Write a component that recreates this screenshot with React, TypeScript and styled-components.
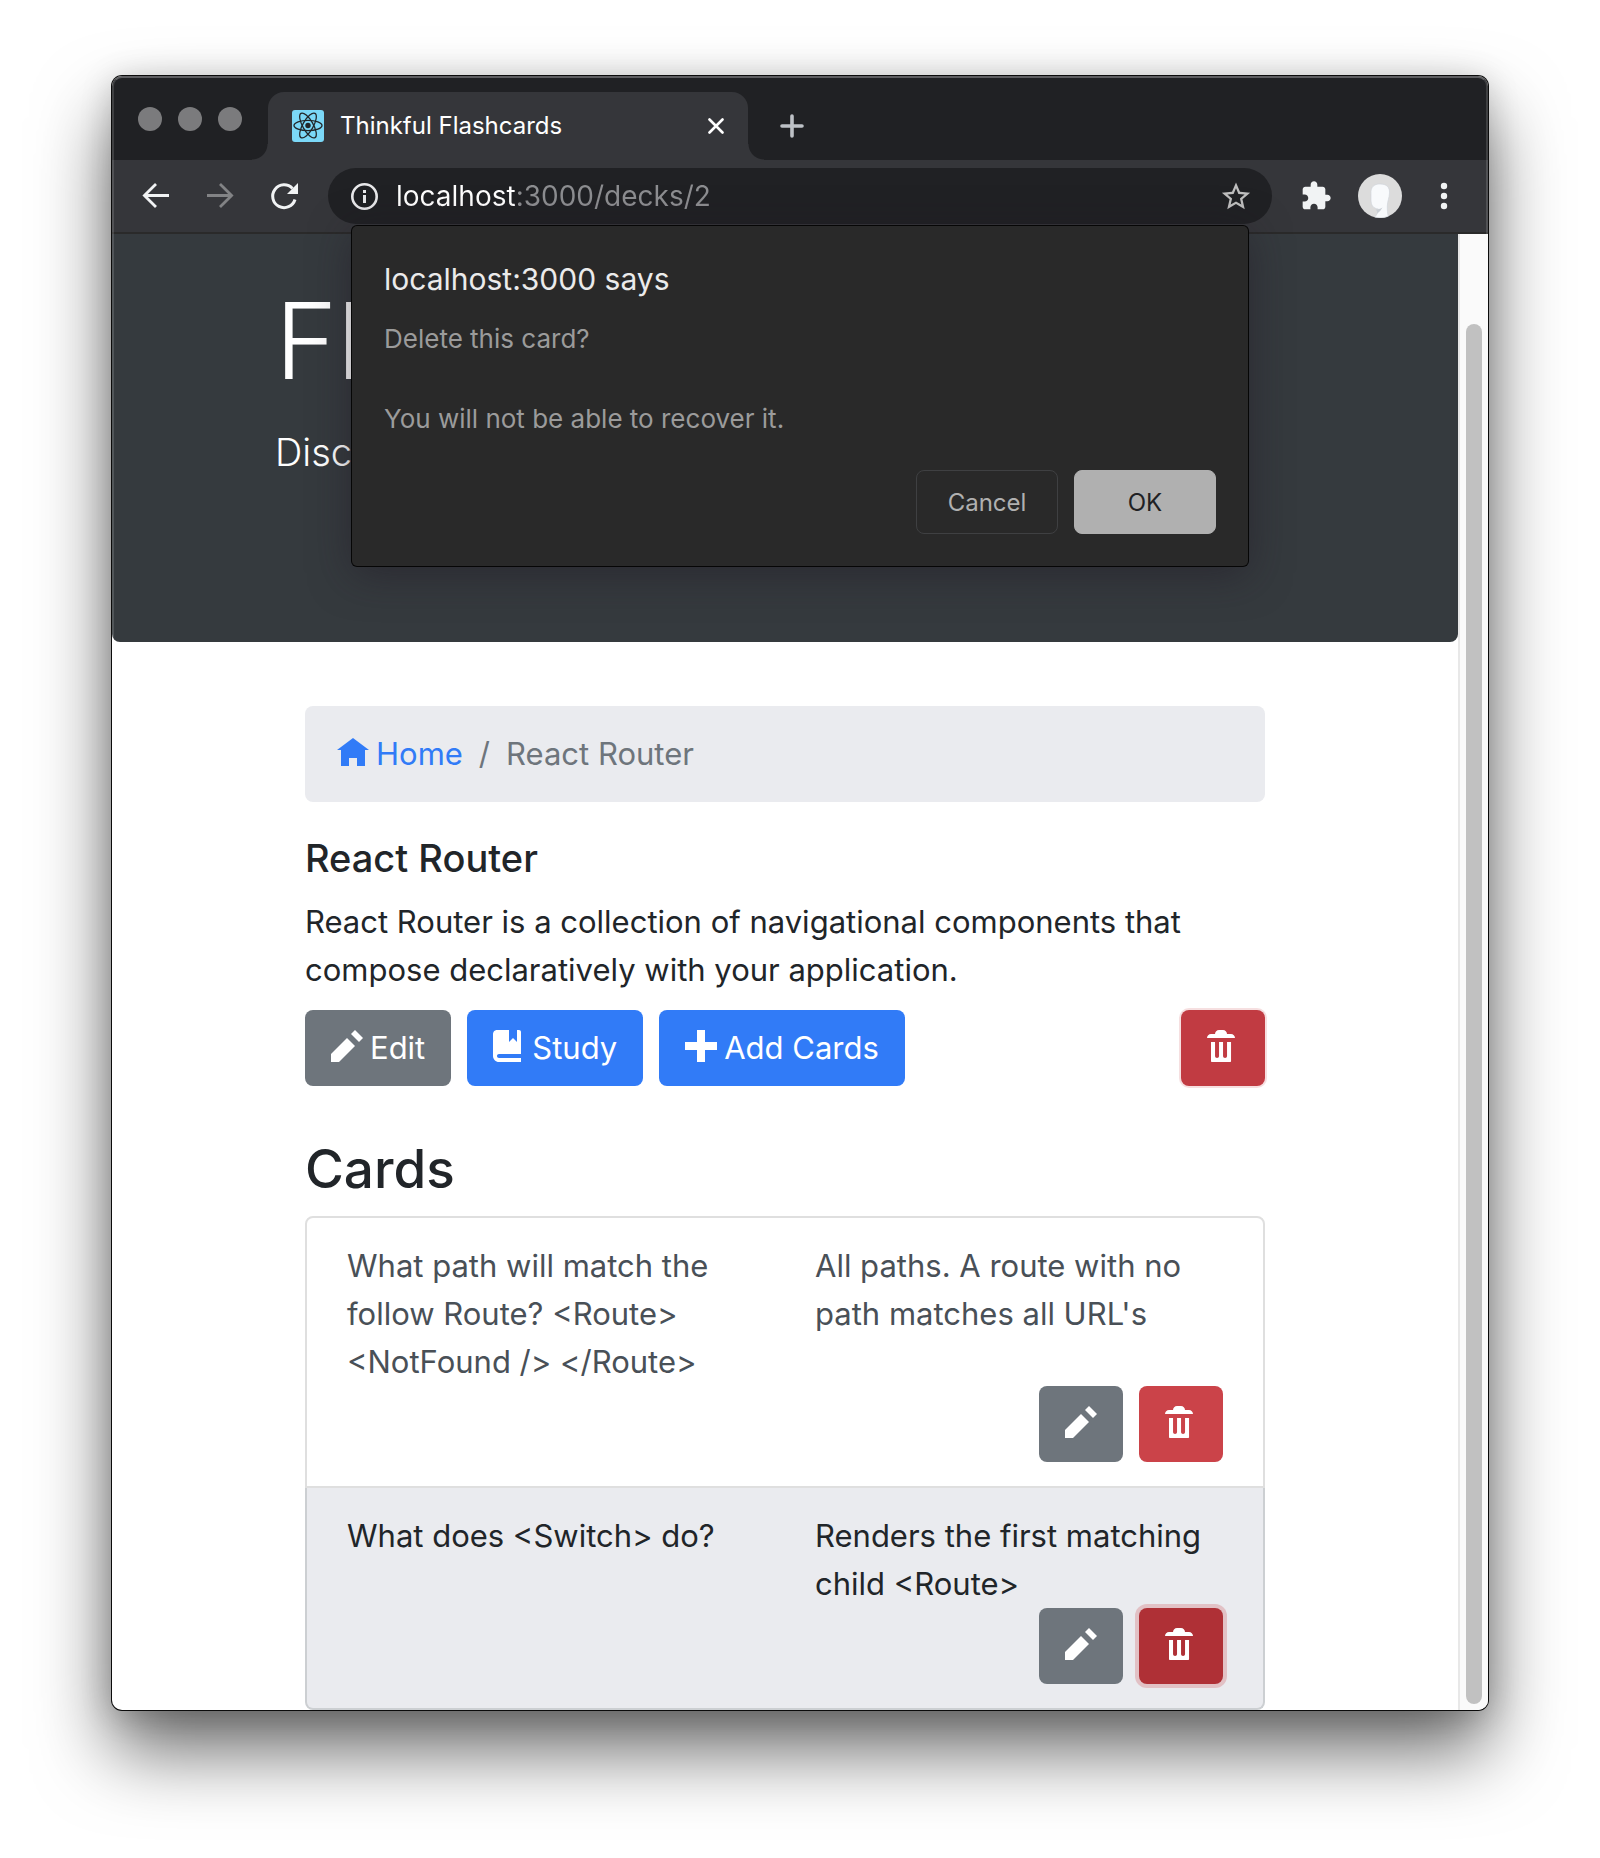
import React from "react";
import styled, { createGlobalStyle, css } from "styled-components";

const colors = {
  strip: "#202124",
  toolbar: "#35363a",
  jumbotron: "#353a3e",
  dialog: "#292929",
  primary: "#317bf7",
  secondary: "#6e757c",
  danger: "#cb4349",
  dangerFocus: "#c13b42",
  dangerActive: "#af3036",
  panel: "#eaebef",
  text: "#212529",
  muted: "#495057",
  line: "#dfdfdf",
};

const GlobalStyle = createGlobalStyle`
  *, *::before, *::after { box-sizing: border-box; }
  body {
    margin: 0;
    background: #fff;
    font-family: Inter, "Liberation Sans", sans-serif;
    color: ${colors.text};
  }
  h1, h2, h3, p, ol, ul { margin: 0; padding: 0; font-weight: 400; }
  ol, ul { list-style: none; }
  button, input { font-family: inherit; }
`;

const Desktop = styled.div`
  padding: 76px 112px 148px;
`;

const Window = styled.div`
  position: relative;
  border-radius: 10px;
  background: #fff;
  box-shadow:
    0 0 0 1px #0b0b0b,
    0 4px 32px rgba(0, 0, 0, 0.18),
    0 40px 76px rgba(0, 0, 0, 0.6);

  &::after {
    content: "";
    position: absolute;
    inset: 0;
    border-radius: 10px;
    border: 2px solid rgba(255, 255, 255, 0.14);
    border-top-color: rgba(255, 255, 255, 0.28);
    border-bottom: 0;
    pointer-events: none;
  }
`;

const TabStrip = styled.div`
  display: flex;
  align-items: center;
  height: 84px;
  border-radius: 10px 10px 0 0;
  background: ${colors.strip};
`;

const WindowControls = styled.div`
  display: flex;
  gap: 16px;
  padding: 2px 26px 0;
`;

const WindowControl = styled.button`
  width: 24px;
  height: 24px;
  padding: 0;
  border: 0;
  border-radius: 50%;
  background: #7b7b7d;
`;

const Tab = styled.div`
  position: relative;
  display: flex;
  align-items: center;
  align-self: flex-end;
  gap: 16px;
  width: 480px;
  height: 68px;
  padding: 0 24px;
  border-radius: 16px 16px 0 0;
  background: ${colors.toolbar};

  &::before,
  &::after {
    content: "";
    position: absolute;
    bottom: 0;
    width: 16px;
    height: 16px;
  }
  &::before {
    right: 100%;
    background: radial-gradient(circle at 0 0, transparent 15px, ${colors.toolbar} 16px);
  }
  &::after {
    left: 100%;
    background: radial-gradient(circle at 100% 0, transparent 15px, ${colors.toolbar} 16px);
  }
`;

const TabTitle = styled.span`
  flex: 1;
  color: #fff;
  font-size: 24px;
  line-height: 32px;
`;

const IconButton = styled.button<{ $size: number }>`
  display: flex;
  flex: none;
  align-items: center;
  justify-content: center;
  width: ${(p) => p.$size}px;
  height: ${(p) => p.$size}px;
  padding: 0;
  border: 0;
  background: none;
`;

const NewTab = styled(IconButton)`
  align-self: flex-end;
  margin: 0 32px 22px;
`;

const Toolbar = styled.div`
  display: flex;
  align-items: center;
  height: 74px;
  padding: 0 28px;
  border-bottom: 2px solid #2a2a2a;
  background: ${colors.toolbar};
`;

const ToolGroup = styled.div<{ $gap: number }>`
  display: flex;
  align-items: center;
  gap: ${(p) => p.$gap}px;
`;

const Omnibox = styled.div`
  display: flex;
  flex: 1;
  align-items: center;
  gap: 16px;
  height: 56px;
  margin: 0 28px;
  padding: 0 20px;
  border-radius: 28px;
  background: ${colors.strip};
`;

const Address = styled.input`
  flex: 1;
  min-width: 0;
  height: 40px;
  padding: 0;
  border: 0;
  outline: 0;
  color: #fff;
  font-size: 28px;
  background: linear-gradient(90deg, #fff 120px, #8d8e91 120px);
  background-clip: text;
  -webkit-text-fill-color: transparent;
`;

const Viewport = styled.div`
  display: flex;
`;

const Page = styled.main`
  flex: 1;
  min-width: 0;
`;

const ScrollTrack = styled.div`
  width: 30px;
  padding: 90px 6px 6px;
  border-left: 2px solid #e8e8e8;
  border-radius: 0 0 10px 0;
  background: #fafafa;
`;

const ScrollThumb = styled.div`
  width: 16px;
  height: 100%;
  border-radius: 8px;
  background: #c1c1c1;
`;

const Jumbotron = styled.header`
  padding: 40px 0 160px;
  border-radius: 0 0 8px 8px;
  background: ${colors.jumbotron};
  color: #fff;
`;

const Container = styled.div<{ $inset: number }>`
  max-width: 1080px;
  margin: 0 auto;
  padding: 0 ${(p) => p.$inset}px;
`;

const Brand = styled.h1`
  margin-bottom: 14px;
  font-size: 106px;
  font-weight: 300;
  line-height: 134px;
`;

const Lead = styled.p`
  font-size: 38px;
  font-weight: 300;
  line-height: 60px;
`;

const Breadcrumb = styled.ol`
  display: flex;
  margin: 64px 0 32px;
  padding: 24px 32px;
  border-radius: 8px;
  background: ${colors.panel};
  font-size: 31px;
  line-height: 48px;
`;

const Crumb = styled.li`
  color: ${colors.secondary};

  & + &::before {
    content: "/";
    padding: 0 16px;
  }
`;

const HomeLink = styled.a`
  display: flex;
  align-items: center;
  gap: 7px;
  color: ${colors.primary};
  text-decoration: none;
`;

const DeckName = styled.h2`
  margin-bottom: 16px;
  font-size: 38px;
  font-weight: 500;
  line-height: 48px;
`;

const DeckText = styled.p`
  margin-bottom: 16px;
  font-size: 31px;
  line-height: 48px;
`;

const Actions = styled.div<{ $end?: boolean }>`
  display: flex;
  gap: 16px;
  justify-content: ${(p) => (p.$end ? "flex-end" : "flex-start")};
`;

type Tone = "primary" | "secondary" | "danger";
type State = "focus" | "active";

const Button = styled.button<{ $tone: Tone; $state?: State; $push?: boolean }>`
  display: flex;
  align-items: center;
  gap: 7px;
  height: 76px;
  padding: 0 26px;
  border: 0;
  border-radius: 8px;
  background: ${(p) => colors[p.$tone]};
  color: #fff;
  font-size: 31px;
  line-height: 48px;

  svg {
    margin-bottom: 4px;
  }

  ${(p) => p.$push && css`margin-left: auto;`}
  ${(p) =>
    p.$state === "focus" &&
    css`
      background: ${colors.dangerFocus};
      box-shadow: 0 0 0 2px rgba(203, 67, 73, 0.17);
    `}
  ${(p) =>
    p.$state === "active" &&
    css`
      background: ${colors.dangerActive};
      box-shadow: 0 0 0 4px rgba(203, 67, 73, 0.25);
    `}
`;

const CardsTitle = styled.h2`
  margin: 50px 0 14px;
  font-size: 53px;
  font-weight: 500;
  line-height: 66px;
`;

const CardList = styled.ul`
  border-radius: 8px;
`;

const CardItem = styled.li<{ $active?: boolean }>`
  display: grid;
  grid-template-columns: 1fr 1fr;
  column-gap: 60px;
  padding: 24px 40px;
  border: 2px solid ${colors.line};
  color: ${colors.muted};
  font-size: 31px;
  line-height: 48px;

  &:first-child {
    border-radius: 8px 8px 0 0;
  }
  &:last-child {
    border-radius: 0 0 8px 8px;
  }
  ${(p) =>
    p.$active &&
    css`
      border-color: #cccfd2;
      border-top: 0;
      background: ${colors.panel};
      color: ${colors.text};
    `}
`;

const CardActions = styled(Actions)`
  grid-column: 1 / -1;
`;

const Dialog = styled.div`
  position: absolute;
  top: 150px;
  left: 0;
  right: 0;
  z-index: 1;
  width: 896px;
  margin: 0 auto;
  padding: 32px;
  border-radius: 5px;
  background: ${colors.dialog};
  box-shadow:
    0 0 0 1px #060606,
    0 8px 40px rgba(32, 24, 36, 0.5);
`;

const DialogTitle = styled.h2`
  margin-bottom: 18px;
  color: #ebebeb;
  font-size: 30px;
  line-height: 43px;
`;

const DialogText = styled.p`
  margin-bottom: 31px;
  color: #9b9b9b;
  font-size: 26px;
  line-height: 40px;
  white-space: pre-line;
`;

const DialogButton = styled.button<{ $main?: boolean }>`
  width: 142px;
  height: 64px;
  padding: 0;
  border: 1px solid ${(p) => (p.$main ? "#b0b0b0" : "#3f4042")};
  border-radius: 8px;
  background: ${(p) => (p.$main ? "#b0b0b0" : "transparent")};
  color: ${(p) => (p.$main ? "#202124" : "#b0b0b0")};
  font-size: 24px;
`;

/* Open Iconic glyphs, drawn on an 8 by 8 grid */
const glyphs = {
  pencil: "M6 0l-1 1 2 2 1-1-2-2zm-2 2l-4 4v2h2l4-4-2-2z",
  trash:
    "M3 0c-.55 0-1 .45-1 1h-1c-.55 0-1 .45-1 1h7c0-.55-.45-1-1-1h-1c0-.55-.45-1-1-1h-1zm-2 3v4.81c0 .11.08.19.19.19h4.63c.11 0 .19-.08.19-.19v-4.81h-1v3.5c0 .28-.22.5-.5.5s-.5-.22-.5-.5v-3.5h-1v3.5c0 .28-.22.5-.5.5s-.5-.22-.5-.5v-3.5h-1z",
  book: "M1 0c-.07 0-.13.01-.19.03-.39.08-.7.39-.78.78-.03.06-.03.12-.03.19v5.5c0 .83.67 1.5 1.5 1.5h5.5v-1h-5.5c-.28 0-.5-.22-.5-.5s.22-.5.5-.5h5.5v-5.5c0-.28-.22-.5-.5-.5h-.5v3l-1-1-1 1v-3h-3z",
  plus: "M3 0v3h-3v2h3v3h2v-3h3v-2h-3v-3h-2z",
  home: "M4 0l-4 3h1v4h2v-2h2v2h2v-4.03l1 .03-4-3z",
};

function Glyph({ name }: { name: keyof typeof glyphs }) {
  return (
    <svg width="32" height="32" viewBox="0 0 8 8" fill="currentColor" aria-hidden="true">
      <path d={glyphs[name]} />
    </svg>
  );
}

function Favicon() {
  return (
    <svg width="32" height="32" viewBox="0 0 32 32" aria-hidden="true">
      <rect width="32" height="32" rx="3" fill="#7bd8f7" />
      <g fill="none" stroke="#222629" strokeWidth="1.3">
        <ellipse cx="16" cy="15.5" rx="14" ry="5.2" />
        <ellipse cx="16" cy="15.5" rx="14" ry="5.2" transform="rotate(60 16 15.5)" />
        <ellipse cx="16" cy="15.5" rx="14" ry="5.2" transform="rotate(120 16 15.5)" />
      </g>
      <circle cx="16" cy="15.5" r="2.7" fill="#222629" />
    </svg>
  );
}

function Arrow({ color, flip }: { color: string; flip?: boolean }) {
  return (
    <svg width="32" height="32" viewBox="0 0 32 32" fill="none" stroke={color} strokeWidth="2.8" aria-hidden="true">
      <path d={flip ? "M3 15.5h24M16 4l11.6 11.5L16 27" : "M29 15.5H5M16 4L4.4 15.5 16 27"} />
    </svg>
  );
}

function Reload() {
  return (
    <svg width="32" height="32" viewBox="0 0 32 32" aria-hidden="true">
      <path d="M24.5 8.5A11.4 11.4 0 1 0 27 19.5" fill="none" stroke="#f1f3f4" strokeWidth="3" />
      <path d="M30 3v11H19z" fill="#f1f3f4" />
    </svg>
  );
}

function Info() {
  return (
    <svg width="32" height="32" viewBox="0 0 32 32" aria-hidden="true">
      <circle cx="16.5" cy="16.5" r="12.2" fill="none" stroke="#e8e8ea" strokeWidth="2.6" />
      <path d="M15 15h3v8h-3zM15 10h3v3h-3z" fill="#e8e8ea" />
    </svg>
  );
}

function Star() {
  return (
    <svg width="32" height="32" viewBox="0.7 0.3 22.6 22.6" fill="#bfbfbf" aria-hidden="true">
      <path d="M22 9.24l-7.19-.62L12 2 9.19 8.63 2 9.24l5.46 4.73L5.82 21 12 17.27 18.18 21l-1.63-7.03L22 9.24zM12 15.4l-3.76 2.27 1-4.28-3.32-2.88 4.38-.38L12 6.1l1.71 4.04 4.38.38-3.32 2.88 1 4.28L12 15.4z" />
    </svg>
  );
}

function Puzzle() {
  return (
    <svg width="32" height="32" viewBox="0 0 24 24" fill="#f1f3f4" aria-hidden="true">
      <path d="M20.5 11H19V7c0-1.1-.9-2-2-2h-4V3.5C13 2.12 11.88 1 10.5 1S8 2.12 8 3.5V5H4c-1.1 0-1.99.9-1.99 2v3.8H3.5c1.49 0 2.7 1.21 2.7 2.7s-1.21 2.7-2.7 2.7H2V20c0 1.1.9 2 2 2h3.8v-1.5c0-1.49 1.21-2.7 2.7-2.7 1.49 0 2.7 1.21 2.7 2.7V22H17c1.1 0 2-.9 2-2v-4h1.5c1.38 0 2.5-1.12 2.5-2.5S21.88 11 20.5 11z" />
    </svg>
  );
}

function Avatar() {
  return (
    <svg width="44" height="44" viewBox="0 0 44 44" aria-hidden="true">
      <circle cx="22" cy="22" r="22" fill="#dcdcdc" />
      <path
        d="M13 20C12.500 13 16 10 22 10c6.500 0 9.800 3 9.500 9-.3 5-2 8-2.200 13-.1 4 .2 7 .9 10.300-4 1.700-9.500 2-13.700.7C19 41 20 38.500 20.500 35 15 34.500 13 31 13 26z"
        fill="#f8fafc"
        stroke="#cdd2d8"
        strokeWidth="0.6"
      />
      <path d="M19 39.500c2.500-1.500 4-3.500 5.500-6-3 1.800-5 2.200-7 2 1.500 1 2 2.500 1.500 4z" fill="#c9ced4" />
    </svg>
  );
}

function Dots() {
  return (
    <svg width="32" height="32" viewBox="0 0 32 32" fill="#f1f3f4" aria-hidden="true">
      <circle cx="16" cy="6" r="3.2" />
      <circle cx="16" cy="16" r="3.2" />
      <circle cx="16" cy="26" r="3.2" />
    </svg>
  );
}

const cards = [
  {
    front: "What path will match the follow Route? <Route> <NotFound /> </Route>",
    back: "All paths. A route with no path matches all URL's",
  },
  {
    front: "What does <Switch> do?",
    back: "Renders the first matching child <Route>",
    active: true,
  },
];

export default function App() {
  return (
    <Desktop>
      <GlobalStyle />
      <Window>
        <TabStrip>
          <WindowControls>
            <WindowControl aria-label="Close window" />
            <WindowControl aria-label="Minimize window" />
            <WindowControl aria-label="Zoom window" />
          </WindowControls>
          <Tab>
            <Favicon />
            <TabTitle>Thinkful Flashcards</TabTitle>
            <IconButton $size={16} aria-label="Close tab">
              <svg width="16" height="16" viewBox="0 0 16 16" stroke="#fff" strokeWidth="2.6" strokeLinecap="round" aria-hidden="true">
                <path d="M1.500 1.500l13 13M14.500 1.500l-13 13" />
              </svg>
            </IconButton>
          </Tab>
          <NewTab $size={24} aria-label="New tab">
            <svg width="24" height="24" viewBox="0 0 24 24" stroke="#bdc1c6" strokeWidth="3.6" strokeLinecap="round" aria-hidden="true">
              <path d="M12 2v20M2 12h20" />
            </svg>
          </NewTab>
        </TabStrip>

        <Toolbar>
          <ToolGroup $gap={32}>
            <IconButton $size={32} aria-label="Back">
              <Arrow color="#f1f3f4" />
            </IconButton>
            <IconButton $size={32} aria-label="Forward">
              <Arrow color="#828385" flip />
            </IconButton>
            <IconButton $size={32} aria-label="Reload">
              <Reload />
            </IconButton>
          </ToolGroup>
          <Omnibox>
            <IconButton $size={32} aria-label="Site information">
              <Info />
            </IconButton>
            <Address aria-label="Address" defaultValue="localhost:3000/decks/2" />
            <IconButton $size={32} aria-label="Bookmark this page">
              <Star />
            </IconButton>
          </Omnibox>
          <ToolGroup $gap={26}>
            <IconButton $size={32} aria-label="Extensions">
              <Puzzle />
            </IconButton>
            <IconButton $size={44} aria-label="Profile">
              <Avatar />
            </IconButton>
            <IconButton $size={32} aria-label="Menu">
              <Dots />
            </IconButton>
          </ToolGroup>
        </Toolbar>

        <Viewport>
          <Page>
            <Jumbotron>
              <Container $inset={30}>
                <Brand>Fl</Brand>
                <Lead>Disc</Lead>
              </Container>
            </Jumbotron>
            <Container $inset={60}>
              <nav aria-label="Breadcrumb">
                <Breadcrumb>
                  <Crumb>
                    <HomeLink href="#">
                      <Glyph name="home" />
                      Home
                    </HomeLink>
                  </Crumb>
                  <Crumb>React Router</Crumb>
                </Breadcrumb>
              </nav>
              <DeckName>React Router</DeckName>
              <DeckText>
                React Router is a collection of navigational components that compose declaratively with your
                application.
              </DeckText>
              <Actions>
                <Button $tone="secondary">
                  <Glyph name="pencil" />
                  Edit
                </Button>
                <Button $tone="primary">
                  <Glyph name="book" />
                  Study
                </Button>
                <Button $tone="primary">
                  <Glyph name="plus" />
                  Add Cards
                </Button>
                <Button $tone="danger" $state="focus" $push aria-label="Delete deck">
                  <Glyph name="trash" />
                </Button>
              </Actions>
              <CardsTitle>Cards</CardsTitle>
              <CardList>
                {cards.map((card) => (
                  <CardItem key={card.front} $active={card.active}>
                    <p>{card.front}</p>
                    <p>{card.back}</p>
                    <CardActions $end>
                      <Button $tone="secondary" aria-label="Edit card">
                        <Glyph name="pencil" />
                      </Button>
                      <Button
                        $tone="danger"
                        $state={card.active ? "active" : undefined}
                        aria-label="Delete card"
                      >
                        <Glyph name="trash" />
                      </Button>
                    </CardActions>
                  </CardItem>
                ))}
              </CardList>
            </Container>
          </Page>
          <ScrollTrack>
            <ScrollThumb />
          </ScrollTrack>
        </Viewport>

        <Dialog role="dialog" aria-labelledby="dialog-title">
          <DialogTitle id="dialog-title">localhost:3000 says</DialogTitle>
          <DialogText>{"Delete this card?\n\nYou will not be able to recover it."}</DialogText>
          <Actions $end>
            <DialogButton>Cancel</DialogButton>
            <DialogButton $main>OK</DialogButton>
          </Actions>
        </Dialog>
      </Window>
    </Desktop>
  );
}
